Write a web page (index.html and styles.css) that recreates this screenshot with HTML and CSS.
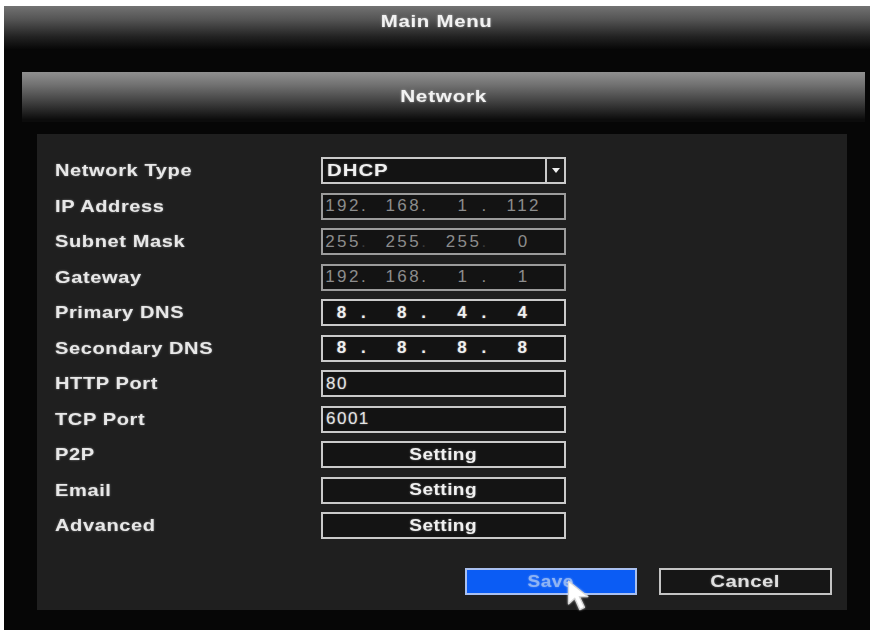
FILE: index.html
```html
<!DOCTYPE html>
<html>
<head>
<meta charset="utf-8">
<link rel="stylesheet" href="styles.css">
</head>
<body>
<div class="window">
  <div class="titlebar"><span class="t">Main Menu</span></div>
  <div class="frame">
    <div class="header"><span class="t">Network</span></div>
    <div class="panel">
      <div class="form">
        <div class="label"><span class="t">Network Type</span></div>
        <div class="field select"><span class="val"><span class="t">DHCP</span></span><span class="arrow"></span></div>

        <div class="label"><span class="t">IP Address</span></div>
        <div class="field ip disabled">
          <span class="cell"><span class="num">192</span><span class="dot">.</span></span>
          <span class="cell"><span class="num">168</span><span class="dot">.</span></span>
          <span class="cell"><span class="num">1</span><span class="dot">.</span></span>
          <span class="cell"><span class="num">112</span></span>
        </div>

        <div class="label"><span class="t">Subnet Mask</span></div>
        <div class="field ip disabled">
          <span class="cell"><span class="num">255</span><span class="dot faint">.</span></span>
          <span class="cell"><span class="num">255</span><span class="dot faint">.</span></span>
          <span class="cell"><span class="num">255</span><span class="dot faint">.</span></span>
          <span class="cell"><span class="num">0</span></span>
        </div>

        <div class="label"><span class="t">Gateway</span></div>
        <div class="field ip disabled">
          <span class="cell"><span class="num">192</span><span class="dot">.</span></span>
          <span class="cell"><span class="num">168</span><span class="dot">.</span></span>
          <span class="cell"><span class="num">1</span><span class="dot">.</span></span>
          <span class="cell"><span class="num">1</span></span>
        </div>

        <div class="label"><span class="t">Primary DNS</span></div>
        <div class="field ip">
          <span class="cell"><span class="num">8</span><span class="dot">.</span></span>
          <span class="cell"><span class="num">8</span><span class="dot">.</span></span>
          <span class="cell"><span class="num">4</span><span class="dot">.</span></span>
          <span class="cell"><span class="num">4</span></span>
        </div>

        <div class="label"><span class="t">Secondary DNS</span></div>
        <div class="field ip">
          <span class="cell"><span class="num">8</span><span class="dot">.</span></span>
          <span class="cell"><span class="num">8</span><span class="dot">.</span></span>
          <span class="cell"><span class="num">8</span><span class="dot">.</span></span>
          <span class="cell"><span class="num">8</span></span>
        </div>

        <div class="label"><span class="t">HTTP Port</span></div>
        <div class="field text"><span class="val port">80</span></div>

        <div class="label"><span class="t">TCP Port</span></div>
        <div class="field text"><span class="val port">6001</span></div>

        <div class="label"><span class="t">P2P</span></div>
        <div class="field button"><span class="t">Setting</span></div>

        <div class="label"><span class="t">Email</span></div>
        <div class="field button"><span class="t">Setting</span></div>

        <div class="label"><span class="t">Advanced</span></div>
        <div class="field button"><span class="t">Setting</span></div>
      </div>
      <div class="actions">
        <div class="btn save"><span class="t">Save</span>
          <svg class="cursor" width="30" height="34" viewBox="0 0 26 30">
            <path d="M2 2 L2 22 L7.5 17 L12 27 L16 25 L11.5 15.5 L19 15.5 Z" fill="#ffffff" stroke="#d8d8d8" stroke-width="1.2" stroke-linejoin="round"/>
          </svg>
        </div>
        <div class="btn cancel"><span class="t">Cancel</span></div>
      </div>
    </div>
  </div>
</div>
</body>
</html>
```

FILE: styles.css
```css
html, body {
  margin: 0;
  padding: 0;
  background: #ffffff;
}

body {
  font-family: "Liberation Sans", Arial, sans-serif;
}

.t {
  display: inline-block;
  transform: scaleX(1.18);
  transform-origin: center center;
}

.window {
  margin: 6px 3px 2px 4px;
  width: 866px;
  height: 624px;
  background: #060606;
  display: flex;
  flex-direction: column;
  box-sizing: border-box;
}

.titlebar {
  height: 44px;
  flex: none;
  background: linear-gradient(#727272 0%, #555555 30%, #222222 70%, #050505 100%);
  color: #f2f2f2;
  text-align: center;
  font-size: 17px;
  font-weight: 700;
  line-height: 32px;
  letter-spacing: 0.6px;
  text-shadow: 0 0 2px rgba(255, 255, 255, 0.5);
}

.titlebar .t {
  transform: scaleX(1.2);
}

.frame {
  flex: 1;
  display: flex;
  flex-direction: column;
  margin: 22px 5px 0 18px;
}

.header {
  height: 50px;
  flex: none;
  background: linear-gradient(#909090 0%, #727272 25%, #404040 60%, #0c0c0c 95%);
  color: #f2f2f2;
  text-align: center;
  font-size: 17px;
  font-weight: 700;
  line-height: 50px;
  letter-spacing: 0.6px;
  text-shadow: 0 0 2px rgba(255, 255, 255, 0.5);
}

.header .t {
  transform: scaleX(1.22);
}

.panel {
  flex: 1;
  margin: 12px 18px 20px 15px;
  background: #1f1f1f;
  padding: 23px 15px 15px 18px;
  box-sizing: border-box;
  display: flex;
  flex-direction: column;
}

.form {
  display: grid;
  grid-template-columns: 266px 245px;
  grid-auto-rows: 27px;
  row-gap: 8.5px;
}

.label {
  color: #e8e8e8;
  font-size: 17px;
  font-weight: 700;
  letter-spacing: 0.5px;
  line-height: 27px;
  text-shadow: 0 0 2px rgba(255, 255, 255, 0.45);
}

.label .t {
  transform-origin: left center;
}

.field {
  box-sizing: border-box;
  height: 27px;
  border: 2px solid #cacaca;
  background: #131313;
  color: #f0f0f0;
  font-size: 17px;
  display: flex;
  align-items: center;
  text-shadow: 0 0 2px rgba(255, 255, 255, 0.4);
}

.field .val {
  padding-left: 4px;
  flex: 1;
  font-weight: 700;
  letter-spacing: 0.8px;
}

.field .val .t {
  transform-origin: left center;
  transform: scaleX(1.2);
}

.field .val.port {
  font-weight: 400;
  letter-spacing: 1.5px;
  padding-left: 3px;
  color: #e4e4e4;
}

.select .arrow {
  width: 17px;
  align-self: stretch;
  border-left: 2px solid #cacaca;
  background: #1a1a1a;
  display: flex;
  align-items: center;
  justify-content: center;
}

.select .arrow::after {
  content: "";
  width: 0;
  height: 0;
  border-left: 4px solid transparent;
  border-right: 4px solid transparent;
  border-top: 5px solid #f0f0f0;
}

.ip .cell {
  width: 62px;
  display: flex;
  align-items: center;
}

.ip .num {
  width: 38px;
  text-align: center;
  font-weight: 700;
  letter-spacing: 1px;
}

.ip .dot {
  width: 8px;
  text-align: left;
  font-weight: 700;
}

.ip.disabled {
  border-color: #9c9c9c;
  color: #8c8c8c;
  text-shadow: none;
}

.ip.disabled .num {
  font-weight: 400;
  letter-spacing: 2.4px;
  text-indent: 2px;
}

.ip.disabled .dot {
  font-weight: 400;
}

.ip .dot.faint {
  color: #3a3a3a;
}

.button {
  justify-content: center;
  font-weight: 700;
  letter-spacing: 0.4px;
  background: #141414;
}

.button .t {
  transform: scaleX(1.12);
}

.actions {
  margin-top: 29px;
  display: flex;
  justify-content: flex-end;
  gap: 22px;
}

.btn {
  box-sizing: border-box;
  height: 27px;
  display: flex;
  align-items: center;
  justify-content: center;
  font-size: 17px;
  font-weight: 700;
  letter-spacing: 0.4px;
  position: relative;
}

.save {
  width: 172px;
  background: #0b5cf4;
  border: 2px solid #a9c0f0;
  color: #8fb4f3;
  text-shadow: 0 0 2px rgba(160, 190, 255, 0.6);
}

.save .t {
  transform: scaleX(1.12);
}

.cancel {
  width: 173px;
  background: #161616;
  border: 2px solid #c4c4c4;
  color: #e0e0e0;
  text-shadow: 0 0 2px rgba(255, 255, 255, 0.4);
}

.cancel .t {
  transform: scaleX(1.2);
}

.cursor {
  position: absolute;
  left: 99px;
  top: 9px;
  filter: drop-shadow(0 0 1px rgba(255, 255, 255, 0.6));
}
```
